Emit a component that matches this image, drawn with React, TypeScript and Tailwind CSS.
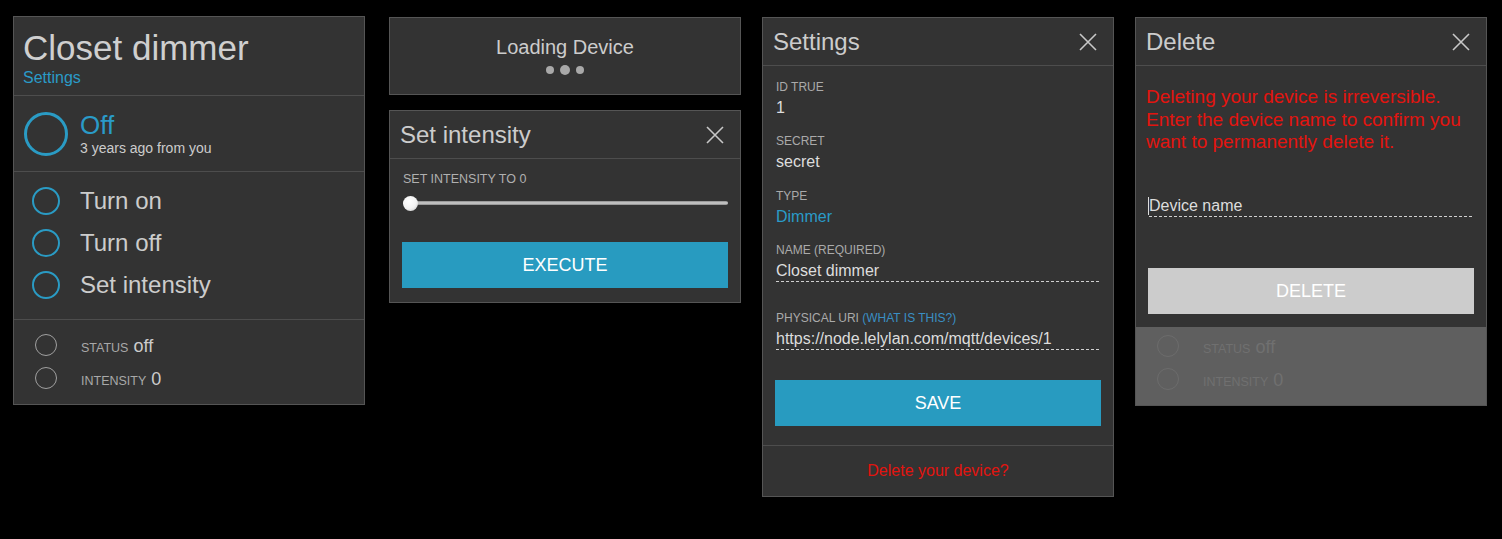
function CloseIcon() {
  return (
    <svg width="18" height="18" viewBox="0 0 18 18" className="shrink-0">
      <path d="M1 1L17 17M17 1L1 17" stroke="#c8c8c8" strokeWidth="1.6" fill="none" />
    </svg>
  );
}

function PropRows({ faded = false }: { faded?: boolean }) {
  const ring = faded ? "border-[#6c6c6c]" : "border-[#a0a0a0]";
  const label = faded ? "text-[#707070]" : "text-[#a8a8a8]";
  const value = faded ? "text-[#707070]" : "text-[#cccccc]";
  return (
    <>
      {[
        ["status", "off"],
        ["intensity", "0"],
      ].map(([k, v]) => (
        <div key={k} className="flex h-[33px] items-center pl-[21px]">
          <span className={`h-[22px] w-[22px] rounded-full border ${ring}`} />
          <div className="ml-[24px] flex items-baseline pt-[3px]">
            <span className={`text-[12.5px] uppercase ${label}`}>{k}</span>
            <span className={`ml-[5px] text-[18px] leading-[22px] ${value}`}>{v}</span>
          </div>
        </div>
      ))}
    </>
  );
}

function DeviceCard() {
  return (
    <div className="w-[352px] border border-[#555555] bg-[#333333]">
      <div className="border-b border-[#4d4d4d] pb-[8px] pl-[9px] pt-[11px]">
        <h1 className="text-[35px] font-normal leading-[40px] text-[#cfcfcf]">Closet dimmer</h1>
        <a className="mt-px block text-[16px] leading-[18px] text-[#2a9bc8]">Settings</a>
      </div>
      <div className="flex h-[76px] items-center border-b border-[#4d4d4d] pl-[10px]">
        <span className="h-[44px] w-[44px] rounded-full border-[3px] border-[#2a9bc4]" />
        <div className="ml-[12px]">
          <div className="text-[26px] leading-[28px] text-[#2a9bc8]">Off</div>
          <div className="text-[14px] leading-[18px] text-[#cccccc]">3 years ago from you</div>
        </div>
      </div>
      <div className="border-b border-[#4d4d4d] pb-[13px] pt-[8px]">
        {["Turn on", "Turn off", "Set intensity"].map((t) => (
          <div key={t} className="flex h-[42px] items-center pl-[18px]">
            <span className="h-[28px] w-[28px] rounded-full border-2 border-[#2a9bc4]" />
            <span className="ml-[20px] text-[24px] leading-[42px] text-[#cccccc]">{t}</span>
          </div>
        ))}
      </div>
      <div className="pb-[10px] pt-[8px]">
        <PropRows />
      </div>
    </div>
  );
}

function LoadingCard() {
  return (
    <div className="w-[352px] border border-[#555555] bg-[#333333] pb-[19px] pt-[17px]">
      <div className="text-center text-[20px] leading-[24px] text-[#cccccc]">Loading Device</div>
      <div className="mt-[6px] flex h-[10px] items-center justify-center gap-[6px]">
        <span className="h-[8px] w-[8px] rounded-full bg-[#a8a8a8]" />
        <span className="h-[10px] w-[10px] rounded-full bg-[#a8a8a8]" />
        <span className="h-[8px] w-[8px] rounded-full bg-[#a8a8a8]" />
      </div>
    </div>
  );
}

function ModalHeader({ title }: { title: string }) {
  return (
    <div className="flex items-center justify-between border-b border-[#4d4d4d] pb-[9px] pl-[10px] pr-[16px] pt-[10px]">
      <h2 className="text-[24px] font-normal leading-[28px] text-[#cccccc]">{title}</h2>
      <CloseIcon />
    </div>
  );
}

function IntensityCard() {
  return (
    <div className="w-[352px] border border-[#555555] bg-[#333333]">
      <ModalHeader title="Set intensity" />
      <div className="px-3 pb-[14px] pt-[12px]">
        <div className="ml-px text-[12.5px] leading-[16px] text-[#b0b0b0]">SET INTENSITY TO 0</div>
        <div className="relative ml-px mt-[8px] h-[16px]">
          <div className="absolute left-0 right-0 top-[6px] h-[4px] rounded-full bg-gradient-to-b from-[#8a8a8a] via-[#d0d0d0] to-[#8a8a8a]" />
          <div className="absolute left-0 top-[0.5px] h-[15px] w-[15px] rounded-full bg-[radial-gradient(circle_at_40%_35%,#ffffff_0%,#f2f2f2_55%,#bdbdbd_100%)]" />
        </div>
        <button className="mt-[31px] block h-[46px] w-full bg-[#289bc0] text-[18px] text-white">EXECUTE</button>
      </div>
    </div>
  );
}

function Field({
  label,
  value,
  valueClass = "text-[#dddddd]",
  input = false,
  extra,
}: {
  label: string;
  value: string;
  valueClass?: string;
  input?: boolean;
  extra?: string;
}) {
  return (
    <div>
      <div className="text-[12px] leading-[16px] text-[#aaaaaa]">
        {label}
        {extra && <span className="text-[#3a8fc4]"> {extra}</span>}
      </div>
      <div
        className={`mt-[3px] text-[16px] leading-[20px] ${valueClass} ${
          input ? "mr-[14px] border-b border-dashed border-[#d0d0d0]" : ""
        }`}
      >
        {value}
      </div>
    </div>
  );
}

function SettingsCard() {
  return (
    <div className="w-[352px] border border-[#555555] bg-[#333333]">
      <ModalHeader title="Settings" />
      <div className="border-b border-[#4d4d4d] pb-[19px] pt-[12.5px]">
        <div className="flex flex-col gap-[15.5px] pl-[13px]">
          <Field label="ID TRUE" value="1" />
          <Field label="SECRET" value="secret" />
          <Field label="TYPE" value="Dimmer" valueClass="text-[#2a9bc8]" />
          <Field label="NAME (REQUIRED)" value="Closet dimmer" input />
        </div>
        <div className="mt-[27.5px] pl-[13px]">
          <Field label="PHYSICAL URI" extra="(WHAT IS THIS?)" value="https://node.lelylan.com/mqtt/devices/1" input />
        </div>
        <div className="px-3">
          <button className="mt-[30.5px] block h-[46px] w-full bg-[#289bc0] text-[18px] text-white">SAVE</button>
        </div>
      </div>
      <div className="py-[15px] text-center text-[16px] leading-[20px] text-[#e3140f]">Delete your device?</div>
    </div>
  );
}

function DeleteCard() {
  return (
    <div className="w-[352px] border border-[#555555] bg-[#5f5f5f]">
      <div className="bg-[#333333]">
        <ModalHeader title="Delete" />
        <div className="pb-[13px] pt-[20px]">
          <p className="pl-[10px] pr-[10px] text-[19px] leading-[22.5px] text-[#e3140f]">
            Deleting your device is irreversible. Enter the device name to confirm you want to permanently delete it.
          </p>
          <div className="relative ml-[13px] mr-[14px] mt-[42.5px] border-b border-dashed border-[#d0d0d0] text-[16px] leading-[20px] text-[#dddddd]">
            <span className="absolute left-[-1px] top-[1px] h-[18px] w-px bg-[#dddddd]" />
            Device name
          </div>
          <div className="px-3">
            <button className="mt-[51px] block h-[46px] w-full bg-[#cccccc] text-[18px] text-white">DELETE</button>
          </div>
        </div>
      </div>
      <div className="pb-[10px] pt-[2px]">
        <PropRows faded />
      </div>
    </div>
  );
}

export default function App() {
  return (
    <div className="min-h-screen bg-black font-['Liberation_Sans',Arial,sans-serif] text-[#cccccc]">
      <div className="flex items-start pl-[13px] pt-[16px]">
        <DeviceCard />
        <div className="ml-[24px] mt-px flex w-[352px] flex-col gap-[15px]">
          <LoadingCard />
          <IntensityCard />
        </div>
        <div className="ml-[21px] mt-px">
          <SettingsCard />
        </div>
        <div className="ml-[21px] mt-px">
          <DeleteCard />
        </div>
      </div>
    </div>
  );
}
